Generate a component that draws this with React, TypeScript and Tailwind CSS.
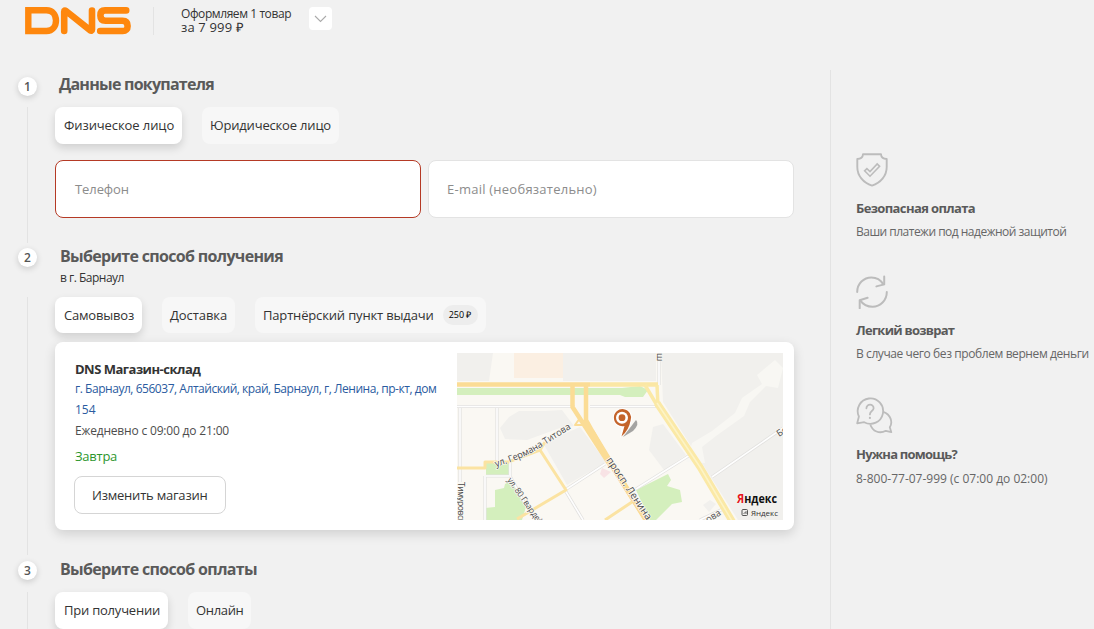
import React from "react";

function Logo() {
  return (
    <svg width="106" height="28" viewBox="0 0 106 28" fill="none" stroke="#fe870d" className="shrink-0">
      <path d="M3.300 3.300H21.500C27.500 3.300 31 8 31 13.600S27.500 24 21.500 24H3.300Z" strokeWidth="6.400" />
      <path
        d="M39.200 24V4.800Q39.200 2.800 41 4L65 23.200Q67 24.600 67 22.400V3.500"
        strokeWidth="6.600"
        strokeLinecap="round"
        strokeLinejoin="round"
      />
      <path
        d="M101.200 3.400H80Q75.400 3.400 75.400 8.500T80.500 13.700H97.500Q102.600 13.700 102.600 18.900T97.500 24H75.200"
        strokeWidth="6.600"
        strokeLinecap="round"
      />
    </svg>
  );
}

function Step({ n }: { n: number }) {
  return (
    <div className="flex size-[19px] shrink-0 items-center justify-center rounded-full bg-white text-xs leading-[19px] font-semibold text-[#555] shadow-[0_2px_6px_rgba(0,0,0,0.16)]">
      {n}
    </div>
  );
}

function Tab({ active, className, children }: { active?: boolean; className: string; children: React.ReactNode }) {
  return (
    <button
      className={
        (active ? "bg-white shadow-[0_4px_8px_rgba(0,0,0,0.14)] " : "bg-[#f7f7f7] ") +
        "flex shrink-0 items-center rounded-lg text-[13px] whitespace-nowrap text-[#333] " +
        className
      }
    >
      {children}
    </button>
  );
}

function ShieldIcon() {
  return (
    <svg width="32" height="34" viewBox="0 0 32 34" fill="none" stroke="#bcbcbc" strokeWidth="1.900">
      <path d="M7 1.200H25C25.200 4 27.400 5.900 30.700 6V14C30.700 23 24.500 29.800 16 32.600C7.500 29.800 1.300 23 1.300 14V6C4.600 5.900 6.800 4 7 1.200Z" strokeLinejoin="round" />
      <path d="M8.600 17.800L10.900 15.600L14 18.600L21.200 11L23.600 13.300L14 23.200Z" strokeWidth="1.600" />
    </svg>
  );
}

function ReturnIcon() {
  return (
    <svg width="32" height="34" viewBox="0 0 32 34" fill="none" stroke="#bcbcbc" strokeWidth="2" strokeLinecap="round" strokeLinejoin="round">
      <path d="M1.200 17C1.200 8.500 7.800 2.400 15.400 2.400C20.500 2.400 24.600 4.800 27.200 9.200" />
      <path d="M28.200 1.400V9.400L20.400 11.400" />
      <path d="M30.800 17C30.800 25.500 24.200 31.700 16.600 31.700C11.500 31.700 7 29.400 4.400 25.600" />
      <path d="M3.700 33.200V25.200L11.600 22.800" />
    </svg>
  );
}

function HelpIcon() {
  return (
    <svg width="37" height="37" viewBox="0 0 37 37" fill="none" stroke="#bcbcbc" strokeWidth="1.800" strokeLinejoin="round">
      <path d="M1.200 26.300L2.900 19.500A12.700 12.700 0 1 1 8.200 25.200Z" />
      <path d="M27.300 14.800C34.800 17.300 37 25.300 33.800 30.300L35.300 35.200L29.800 33.800C23.500 37.200 16.500 34.300 14.300 27.400" />
      <path d="M10.400 11.300C10.400 6.400 17.800 6.600 17.600 11.200C17.500 14.200 13.900 13.900 13.900 17.400" strokeLinecap="round" />
      <circle cx="13.900" cy="20.900" r="1.100" fill="#bcbcbc" stroke="none" />
    </svg>
  );
}

const minorRoads = [
  "M457 406.500H575M590 406.500H656M460 408V482M497 408V462",
  "M486 476H509M510 460V476L524 502M485 476V520",
  "M659 353V385M565 490L605 464M565 490L583 520",
  "M636 489L690 455M712 477L783 428M700 520L725 508",
];

function StoreMap() {
  return (
    <svg width="326" height="167" viewBox="457 353 326 167" className="shrink-0 font-['Open_Sans',sans-serif]">
      <rect x="457" y="353" width="326" height="167" fill="#faf8f3" />
      <g fill="#f1f0ed">
        <path d="M457 353H493L489 381H457Z" />
        <path d="M563 353H656V381H563Z" />
        <path d="M661 353H783V520H738L663 402Z" />
        <path d="M509 417L519 411H545L562 410L574 426L560 428L527 440L505 439L500 428Z" />
        <path d="M543 443L580 427L606 462L567 485Z" />
        <path d="M653 427L663 424L686 455L664 470L649 450Z" />
        <path d="M703 505L710 500L716 504L709 512Z" />
      </g>
      <rect x="514" y="353" width="49" height="25" fill="#fbefe2" />
      <path d="M686 462L692 443L712 431L735 413L742 398L762 384L757 375L775 360L783 368L778 388L766 386L750 402L744 416L716 436L702 447L705 463Z" fill="#f8f7f3" />
      <path d="M602 468L611 472L604 478L600 474Z" fill="#f8e3e5" />
      <g fill="#d4efbd">
        <path d="M457 388H622L640 386L648 390L643 397H625L620 395H457Z" />
        <path d="M486 463H510V475H486Z" />
        <path d="M505 484L513 480L526 507L522 520H485V508L495 507V490L504 488Z" />
        <path d="M636 490L668 474L671 480L667 486L680 490L682 502L672 504L656 520H650Z" />
      </g>
      {minorRoads.map((d) => (
        <g key={d} fill="none">
          <path d={d} stroke="#e2e1df" strokeWidth="3.200" />
          <path d={d} stroke="#fefefe" strokeWidth="1.600" />
        </g>
      ))}
      <g fill="none" strokeLinejoin="round">
        <path d="M457 468H485V462H508L540 450L545 442M540 450L566 490L517 519M605 520L632 502" stroke="#fbe3a2" strokeWidth="3" />
        <path d="M575 425L580 418L584 425Z" stroke="#fbdc95" strokeWidth="2" />
        <path d="M590 384.500H658" stroke="#fbe7a4" strokeWidth="4.500" />
        <path d="M457 384.500H590" stroke="#fbdc95" strokeWidth="4.500" />
        <path d="M572.500 385V407L610 465M586 385V420L610 463L650 526" stroke="#fbdc95" strokeWidth="4.500" />
        <path d="M592 432L612 465L650 526" stroke="#fbdc95" strokeWidth="5.500" />
        <path d="M645 385L658 407M657 385L658 407" stroke="#fbe9a6" strokeWidth="3.500" />
        <path d="M657 403L700 467L735 526" stroke="#fbe9a6" strokeWidth="7" />
        <path d="M657 403L700 467L735 526" stroke="#fdf4c6" strokeWidth="1.500" />
        <path id="titova" d="M496 467L508 463Q525 457 540 448L578 424" />
        <path id="lenina" d="M606 460L658 537" />
        <path id="gvardey" d="M507 480L545 534" />
      </g>
      <g fill="#4a4a4a" fontSize="9.300" stroke="#faf8f3" strokeWidth="1.500" paintOrder="stroke" strokeLinejoin="round">
        <text><textPath href="#titova" textLength="85">ул. Германа Титова</textPath></text>
        <text fontSize="10"><textPath href="#lenina" textLength="73">просп. Ленина</textPath></text>
        <text fontSize="8.500" letterSpacing="-0.300"><textPath href="#gvardey">ул. 80 Гвардейской</textPath></text>
        <text fontSize="8.500" letterSpacing="-0.400" transform="translate(457.500 482) rotate(90)">Тимуровская</text>
        <text transform="translate(708 523) rotate(-32)">ова</text>
        <text transform="translate(779 437) rotate(-32)">Бо</text>
        <text transform="translate(657 353) rotate(90)">ш</text>
      </g>
      <path d="M623 437L636 420Q640 424 633 431Z" fill="#777" opacity="0.650" />
      <path d="M620 438L621.500 427.500A9.700 9.700 0 1 1 631.800 421Q629.500 430 620 438Z" fill="#fff" />
      <path d="M621.500 436.500L624.500 426A8.600 8.600 0 1 1 630.600 420.500Q629 430 621.500 436.500Z" fill="#c4642b" />
      <circle cx="622" cy="417.700" r="6" fill="#fff" />
      <circle cx="622" cy="417.700" r="3.400" fill="#c4642b" />
      <text x="737" y="503" fontSize="12.500" fontWeight="700" fill="#111" textLength="40" lengthAdjust="spacingAndGlyphs">
        <tspan fill="#e8141c">Я</tspan>ндекс
      </text>
      <rect x="742" y="509.500" width="5.500" height="6" rx="1" fill="none" stroke="#444" strokeWidth="0.900" />
      <path d="M743.500 514L746 511.500V514" fill="none" stroke="#444" strokeWidth="0.800" />
      <text x="751" y="515.500" fontSize="8" fill="#333" textLength="27" lengthAdjust="spacingAndGlyphs">Яндекс</text>
    </svg>
  );
}

function Benefit({
  icon,
  title,
  text,
  titleClass,
  textClass,
  className,
}: {
  icon: React.ReactNode;
  title: string;
  text: string;
  titleClass: string;
  textClass: string;
  className: string;
}) {
  return (
    <section className={"flex flex-col whitespace-nowrap " + className}>
      {icon}
      <h3 className={"text-[13px] leading-5 font-bold text-[#5a5a5a] " + titleClass}>{title}</h3>
      <p className={"text-xs leading-5 text-[#666] " + textClass}>{text}</p>
    </section>
  );
}

export default function App() {
  return (
    <div className="flex h-[629px] w-[1094px] flex-col overflow-hidden bg-[#f1f1f1] font-['Open_Sans',sans-serif] text-[#333]">
      <header className="flex h-[70px] shrink-0 items-start pt-[7px] pl-[25px]">
        <Logo />
        <div className="ml-[22px] h-7 w-px bg-[#e3e3e3]" />
        <div className="ml-[27px] flex w-[128px] flex-col text-xs leading-[13px] whitespace-nowrap">
          <span className="tracking-[-0.420px]">Оформляем 1 товар</span>
          <span className="text-[13px] leading-[14px] tracking-[0.160px]">за 7 999 ₽</span>
        </div>
        <button className="flex h-[23px] w-[23px] items-center justify-center rounded bg-white">
          <svg width="13" height="8" viewBox="0 0 13 8" fill="none" stroke="#aaa" strokeWidth="1.100">
            <path d="M1 1L6.500 6.500L12 1" />
          </svg>
        </button>
      </header>

      <div className="flex min-h-0 flex-1">
        <main className="flex w-[830px] shrink-0 pl-[18px]">
          <div className="flex w-[37px] shrink-0 flex-col">
            <div className="flex w-[19px] shrink-0 flex-col items-center pt-[7px]">
              <Step n={1} />
              <div className="mt-[11px] h-[136px] w-px bg-[#e3e3e3]" />
              <div className="mt-[5px]">
                <Step n={2} />
              </div>
              <div className="mt-[30px] h-[258px] w-px bg-[#e3e3e3]" />
              <div className="mt-[6px]">
                <Step n={3} />
              </div>
              <div className="mt-[12px] h-[50px] w-px bg-[#e3e3e3]" />
            </div>
          </div>

          <div className="flex w-[739px] shrink-0 flex-col">
            <h2 className="h-[37px] pt-[2px] pl-1 text-base leading-6 font-bold tracking-[-0.760px] text-[#5a5a5a]">
              Данные покупателя
            </h2>
            <div className="flex gap-5">
              <Tab active className="h-[37px] w-[127px] pl-[9px] tracking-[-0.090px]">Физическое лицо</Tab>
              <Tab className="h-[37px] w-[137px] pl-2 tracking-[-0.180px]">Юридическое лицо</Tab>
            </div>
            <div className="mt-4 flex gap-[7px]">
              <div className="flex h-[58px] w-[366px] items-center rounded-lg border border-[#b53a25] bg-white pt-0.5 pl-[19px] text-[13px] tracking-[-0.090px] text-[#8c8c8c]">
                Телефон
              </div>
              <div className="flex h-[58px] w-[366px] items-center rounded-lg border border-[#e3e3e3] bg-white pt-0.5 pl-[18px] text-[13px] tracking-[0.240px] text-[#8c8c8c]">
                E-mail (необязательно)
              </div>
            </div>

            <h2 className="mt-[26px] pl-[5px] text-base leading-6 font-bold tracking-[-0.680px] text-[#5a5a5a]">
              Выберите способ получения
            </h2>
            <p className="pl-[5px] text-xs leading-5 tracking-[-0.500px]">в г. Барнаул</p>
            <div className="mt-[9px] flex gap-5">
              <Tab active className="h-[36px] w-[87px] pt-0.5 pl-[9px] tracking-[-0.200px]">Самовывоз</Tab>
              <Tab className="h-[36px] w-[73px] pt-0.5 pl-2 tracking-[-0.080px]">Доставка</Tab>
              <Tab className="h-[36px] w-[231px] pl-2 tracking-[-0.160px]">
                <span className="pt-0.5">Партнёрский пункт выдачи</span>
                <span className="ml-[9px] flex h-5 w-[35px] items-center justify-center rounded-full bg-[#ededed] text-[9px] tracking-normal text-black">
                  250 ₽
                </span>
              </Tab>
            </div>

            <div className="mt-[9px] flex h-[188px] shrink-0 rounded-lg bg-white pt-[11px] pl-5 shadow-[0_4px_12px_rgba(0,0,0,0.14)]">
              <div className="flex w-[382px] shrink-0 flex-col items-start pt-2 whitespace-nowrap">
                <h3 className="text-[13px] leading-[17px] font-bold tracking-[-0.500px]">DNS Магазин-склад</h3>
                <p className="text-xs leading-[21px] tracking-[-0.460px] text-[#2a5ba0]">
                  г. Барнаул, 656037, Алтайский, край, Барнаул, г, Ленина, пр-кт, дом
                  <br />
                  <span className="tracking-normal">154</span>
                </p>
                <p className="text-xs leading-[21px] tracking-[-0.180px] text-[#4d4d4d]">Ежедневно с 09:00 до 21:00</p>
                <p className="mt-[5px] text-[13px] leading-5 tracking-[-0.250px] text-[#2d962d]">Завтра</p>
                <button className="mt-[10px] -ml-px flex h-[38px] w-[152px] items-center rounded-lg border border-[#d5d5d5] pt-0.5 pl-[17px] text-[13px] tracking-[-0.220px]">
                  Изменить магазин
                </button>
              </div>
              <StoreMap />
            </div>

            <h2 className="mt-[27px] h-[35px] shrink-0 pl-[5px] text-base leading-6 font-bold tracking-[-0.660px] text-[#5a5a5a]">
              Выберите способ оплаты
            </h2>
            <div className="flex gap-5">
              <Tab active className="h-[37px] w-[113px] pl-[9px] tracking-[-0.220px]">При получении</Tab>
              <Tab className="h-[37px] w-[63px] pl-2 tracking-[-0.330px]">Онлайн</Tab>
            </div>
          </div>
        </main>

        <aside className="flex w-[264px] flex-col border-l border-[#e3e3e3] pt-[83px] pl-[25px]">
          <Benefit
            className="h-[122px]"
            icon={<ShieldIcon />}
            title="Безопасная оплата"
            text="Ваши платежи под надежной защитой"
            titleClass="mt-[11px] mb-1 tracking-[-0.620px]"
            textClass="tracking-[-0.510px]"
          />
          <Benefit
            className="h-[122px]"
            icon={<ReturnIcon />}
            title="Легкий возврат"
            text="В случае чего без проблем вернем деньги"
            titleClass="mt-[11px] mb-[4px] tracking-[-0.740px]"
            textClass="tracking-[-0.410px]"
          />
          <Benefit
            className=""
            icon={<HelpIcon />}
            title="Нужна помощь?"
            text="8-800-77-07-999 (с 07:00 до 02:00)"
            titleClass="mt-[10px] mb-[5px] tracking-[-0.780px]"
            textClass="tracking-normal"
          />
        </aside>
      </div>
    </div>
  );
}
